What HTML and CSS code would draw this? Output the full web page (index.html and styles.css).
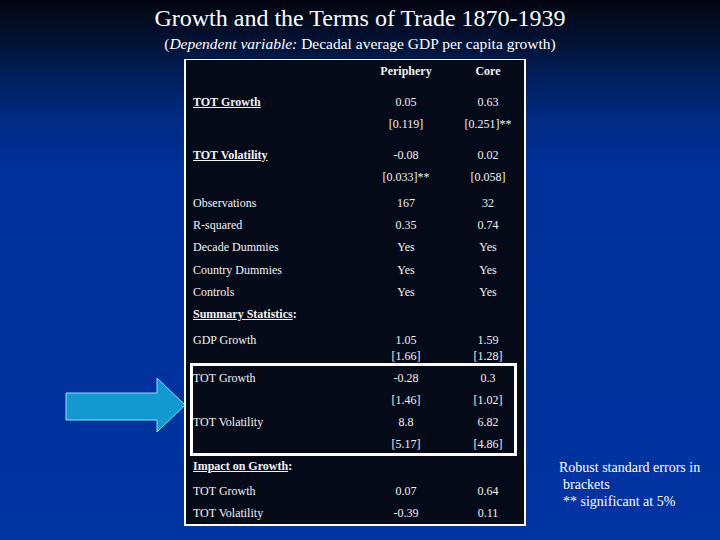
FILE: index.html
```html
<!DOCTYPE html>
<html>
<head>
<meta charset="utf-8">
<link rel="stylesheet" href="styles.css">
</head>
<body>
<div class="slide">
  <header class="head">
    <h1 class="title">Growth and the Terms of Trade 1870-1939</h1>
    <p class="subtitle">(<em>Dependent variable:</em> Decadal average GDP per capita growth)</p>
  </header>
  <main class="main">
    <div class="side">
      <svg class="arrow" width="124" height="58" viewBox="0 0 124 58">
        <polygon points="2,17 93,17 93,2 121,29 93,56 93,44 2,44" fill="#1299cf" stroke="#8fdcf5" stroke-width="1"/>
      </svg>
    </div>
    <section class="table">
      <div class="row head-row"><span></span><b class="c1">Periphery</b><b class="c2">Core</b></div>
      <div class="row gap-lg"><span class="lbl-b">TOT Growth</span><span class="c1">0.05</span><span class="c2">0.63</span></div>
      <div class="row"><span></span><span class="c1">[0.119]</span><span class="c2">[0.251]**</span></div>
      <div class="row gap-lg"><span class="lbl-b">TOT Volatility</span><span class="c1">-0.08</span><span class="c2">0.02</span></div>
      <div class="row"><span></span><span class="c1">[0.033]**</span><span class="c2">[0.058]</span></div>
      <div class="row gap-sm"><span>Observations</span><span class="c1">167</span><span class="c2">32</span></div>
      <div class="row"><span>R-squared</span><span class="c1">0.35</span><span class="c2">0.74</span></div>
      <div class="row"><span>Decade Dummies</span><span class="c1">Yes</span><span class="c2">Yes</span></div>
      <div class="row gap-xs"><span>Country Dummies</span><span class="c1">Yes</span><span class="c2">Yes</span></div>
      <div class="row"><span>Controls</span><span class="c1">Yes</span><span class="c2">Yes</span></div>
      <div class="row"><span class="sec"><u>Summary Statistics</u>:</span></div>
      <div class="row gap-sm"><span>GDP Growth</span><span class="c1">1.05</span><span class="c2">1.59</span></div>
      <div class="row pull"><span></span><span class="c1">[1.66]</span><span class="c2">[1.28]</span></div>
      <div class="highlight">
        <div class="row"><span>TOT Growth</span><span class="c1">-0.28</span><span class="c2">0.3</span></div>
        <div class="row"><span></span><span class="c1">[1.46]</span><span class="c2">[1.02]</span></div>
        <div class="row"><span>TOT Volatility</span><span class="c1">8.8</span><span class="c2">6.82</span></div>
        <div class="row"><span></span><span class="c1">[5.17]</span><span class="c2">[4.86]</span></div>
      </div>
      <div class="row"><span class="sec"><u>Impact on Growth</u>:</span></div>
      <div class="row gap-3"><span>TOT Growth</span><span class="c1">0.07</span><span class="c2">0.64</span></div>
      <div class="row"><span>TOT Volatility</span><span class="c1">-0.39</span><span class="c2">0.11</span></div>
    </section>
    <aside class="note">
      <div>Robust standard errors in</div>
      <div class="ind">brackets</div>
      <div class="ind">** significant at 5%</div>
    </aside>
  </main>
</div>
</body>
</html>
```

FILE: styles.css
```css
html, body {
  margin: 0;
  padding: 0;
}
body {
  width: 720px;
  height: 540px;
  overflow: hidden;
  font-family: "Liberation Serif", "Times New Roman", serif;
  color: #ffffff;
  background: linear-gradient(to bottom, #02050f 0px, #021233 40px, #01205e 80px, #002b84 120px, #00319a 170px, #0034a2 540px);
}
.slide {
  width: 720px;
  height: 540px;
  display: flex;
  flex-direction: column;
}
.head {
  text-align: center;
}
.title {
  margin: 0;
  padding-top: 4px;
  font-size: 24px;
  line-height: 28px;
  font-weight: normal;
}
.subtitle {
  margin: 2px 0 0 0;
  font-size: 15.5px;
  line-height: 20px;
}
.main {
  margin-top: 5px;
  display: flex;
  align-items: flex-start;
}
.side {
  width: 184px;
  flex: none;
}
.arrow {
  display: block;
  margin-top: 317px;
  margin-left: 64px;
}
.table {
  width: 338px;
  flex: none;
  border: 2px solid #ffffff;
  border-top-width: 1px;
  background: #050a18;
  padding-bottom: 0;
  font-size: 12px;
  color: #f2f2f2;
}
.row {
  display: grid;
  grid-template-columns: 180px 66px 85px;
  padding-left: 7px;
  height: 22px;
  line-height: 22px;
  white-space: nowrap;
}
.c1 {
  text-align: center;
}
.c2 {
  text-align: center;
  padding-left: 13px;
}
.lbl-b, .sec {
  font-weight: bold;
}
.lbl-b {
  text-decoration: underline;
}
.gap-lg { margin-top: 9px; }
.gap-sm { margin-top: 4px; }
.gap-3 { margin-top: 3px; }
.gap-xs { margin-top: 1px; }
.pull { margin-top: -6px; }
.highlight {
  position: relative;
}
.highlight::after {
  content: "";
  position: absolute;
  left: 4px;
  right: 7px;
  top: -4px;
  bottom: -1px;
  border: 3px solid #ffffff;
  pointer-events: none;
}
.note {
  padding-left: 33px;
  margin-top: 400px;
  font-size: 14px;
  line-height: 17px;
  white-space: nowrap;
}
.ind {
  padding-left: 4px;
}
```
